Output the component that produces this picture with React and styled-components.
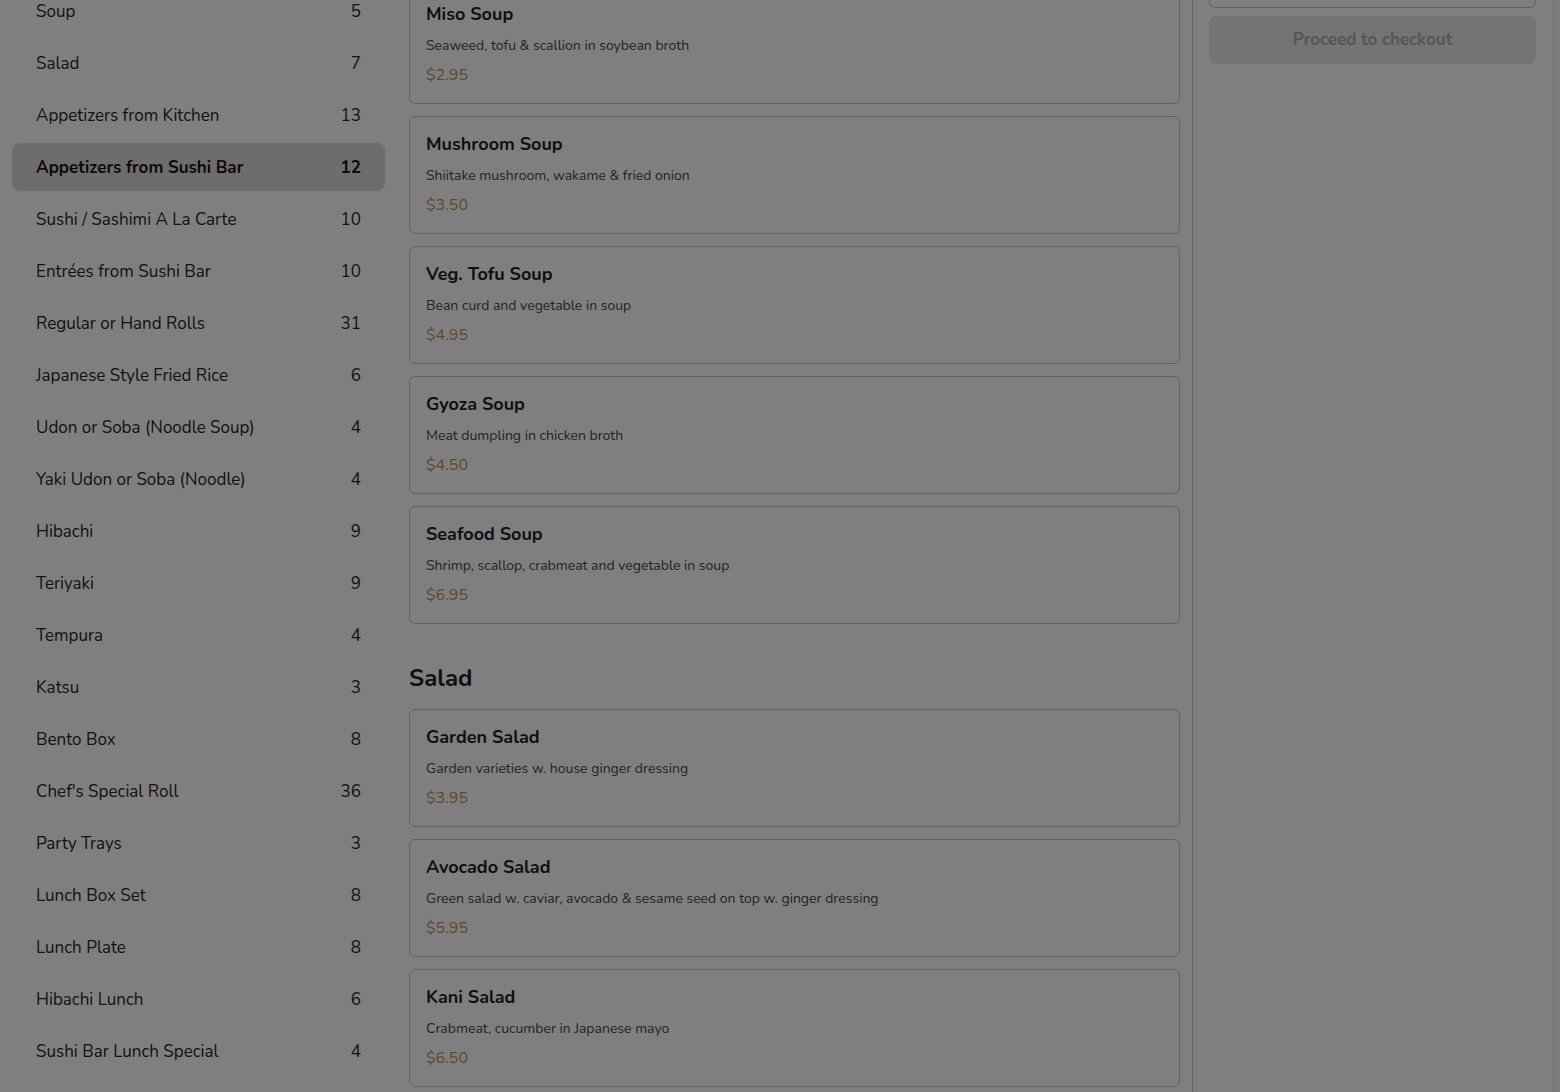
import React from "react";
import styled, { createGlobalStyle } from "styled-components";

const Global = createGlobalStyle`
  html, body { margin: 0; padding: 0; background: #ffffff; }
  body { height: 1092px; overflow: hidden; font-family: Nunito, Lato, "Noto Sans", sans-serif; color: #2c2c2c; }
  * { box-sizing: border-box; }
`;

const Shell = styled.div`
  display: flex;
  width: 1560px;
  height: 1092px;
  overflow: hidden;
  position: relative;
  background: #ffffff;
`;

const Sidebar = styled.aside`
  width: 397px;
  flex: none;
  padding: 0 12px;
`;

const CatList = styled.ul`
  list-style: none;
  margin: -13px 0 0;
  padding: 0;
  display: flex;
  flex-direction: column;
  gap: 4px;
`;

const CatItem = styled.li`
  height: 48px;
  display: flex;
  align-items: center;
  justify-content: space-between;
  padding: 0 24px;
  border-radius: 8px;
  font-size: 17px;
  color: ${(p) => (p.$active ? "#161616" : "#262626")};
  font-weight: ${(p) => (p.$active ? 700 : 400)};
  background: ${(p) => (p.$active ? "#dedad6" : "transparent")};
`;

const Main = styled.main`
  width: 795px;
  flex: none;
  padding: 0 12px;
`;

const MainInner = styled.div`
  margin-top: -60px;
`;

const Section = styled.section`
  display: flex;
  flex-direction: column;
  gap: 12px;
  & + & {
    margin-top: 39px;
  }
`;

const SectionTitle = styled.h2`
  margin: 0 0 4px;
  font-size: 24px;
  line-height: 30px;
  font-weight: 700;
  color: #222222;
`;

const Card = styled.article`
  height: 118px;
  border: 1px solid #c6c6c6;
  border-radius: 6px;
  padding: 15px 16px;
  display: flex;
  flex-direction: column;
`;

const ItemName = styled.h3`
  margin: 0;
  font-size: 18px;
  line-height: 24px;
  font-weight: 700;
  color: #222222;
`;

const ItemDesc = styled.p`
  margin: 10px 0 0;
  font-size: 14px;
  line-height: 20px;
  color: #474747;
`;

const ItemPrice = styled.span`
  margin-top: 9px;
  font-size: 16px;
  line-height: 20px;
  color: #bc935a;
`;

const Rail = styled.aside`
  width: 360px;
  flex: none;
  border-left: 1px solid #cccccc;
  padding: 0 16px;
  display: flex;
  flex-direction: column;
  gap: 8px;
`;

const CartBox = styled.div`
  height: 60px;
  margin-top: -52px;
  border: 1px solid #c6c6c6;
  border-radius: 6px;
`;

const Checkout = styled.button`
  height: 48px;
  border: none;
  border-radius: 8px;
  background: #ebe8e5;
  color: #adadad;
  font-family: inherit;
  font-size: 17px;
  font-weight: 700;
  padding: 0 0 2px;
`;

const ScrollTrack = styled.div`
  width: 8px;
  flex: none;
  background: #f6f6f6;
  border-left: 1px solid #ececec;
`;

const Backdrop = styled.div`
  position: absolute;
  inset: 0;
  background: rgba(0, 0, 0, 0.5);
`;

const categories = [
  ["Soup", 5],
  ["Salad", 7],
  ["Appetizers from Kitchen", 13],
  ["Appetizers from Sushi Bar", 12, true],
  ["Sushi / Sashimi A La Carte", 10],
  ["Entrées from Sushi Bar", 10],
  ["Regular or Hand Rolls", 31],
  ["Japanese Style Fried Rice", 6],
  ["Udon or Soba (Noodle Soup)", 4],
  ["Yaki Udon or Soba (Noodle)", 4],
  ["Hibachi", 9],
  ["Teriyaki", 9],
  ["Tempura", 4],
  ["Katsu", 3],
  ["Bento Box", 8],
  ["Chef's Special Roll", 36],
  ["Party Trays", 3],
  ["Lunch Box Set", 8],
  ["Lunch Plate", 8],
  ["Hibachi Lunch", 6],
  ["Sushi Bar Lunch Special", 4],
];

const sections = [
  {
    title: "Soup",
    items: [
      ["Miso Soup", "Seaweed, tofu & scallion in soybean broth", "$2.95"],
      ["Mushroom Soup", "Shiitake mushroom, wakame & fried onion", "$3.50"],
      ["Veg. Tofu Soup", "Bean curd and vegetable in soup", "$4.95"],
      ["Gyoza Soup", "Meat dumpling in chicken broth", "$4.50"],
      ["Seafood Soup", "Shrimp, scallop, crabmeat and vegetable in soup", "$6.95"],
    ],
  },
  {
    title: "Salad",
    items: [
      ["Garden Salad", "Garden varieties w. house ginger dressing", "$3.95"],
      ["Avocado Salad", "Green salad w. caviar, avocado & sesame seed on top w. ginger dressing", "$5.95"],
      ["Kani Salad", "Crabmeat, cucumber in Japanese mayo", "$6.50"],
    ],
  },
];

export default function App() {
  return (
    <>
      <Global />
      <Shell>
        <Sidebar>
          <CatList>
            {categories.map(([name, count, active]) => (
              <CatItem key={name} $active={active}>
                <span>{name}</span>
                <span>{count}</span>
              </CatItem>
            ))}
          </CatList>
        </Sidebar>
        <Main>
          <MainInner>
            {sections.map((s) => (
              <Section key={s.title}>
                <SectionTitle>{s.title}</SectionTitle>
                {s.items.map(([n, d, p]) => (
                  <Card key={n}>
                    <ItemName>{n}</ItemName>
                    <ItemDesc>{d}</ItemDesc>
                    <ItemPrice>{p}</ItemPrice>
                  </Card>
                ))}
              </Section>
            ))}
          </MainInner>
        </Main>
        <Rail>
          <CartBox />
          <Checkout>Proceed to checkout</Checkout>
        </Rail>
        <ScrollTrack />
        <Backdrop />
      </Shell>
    </>
  );
}
